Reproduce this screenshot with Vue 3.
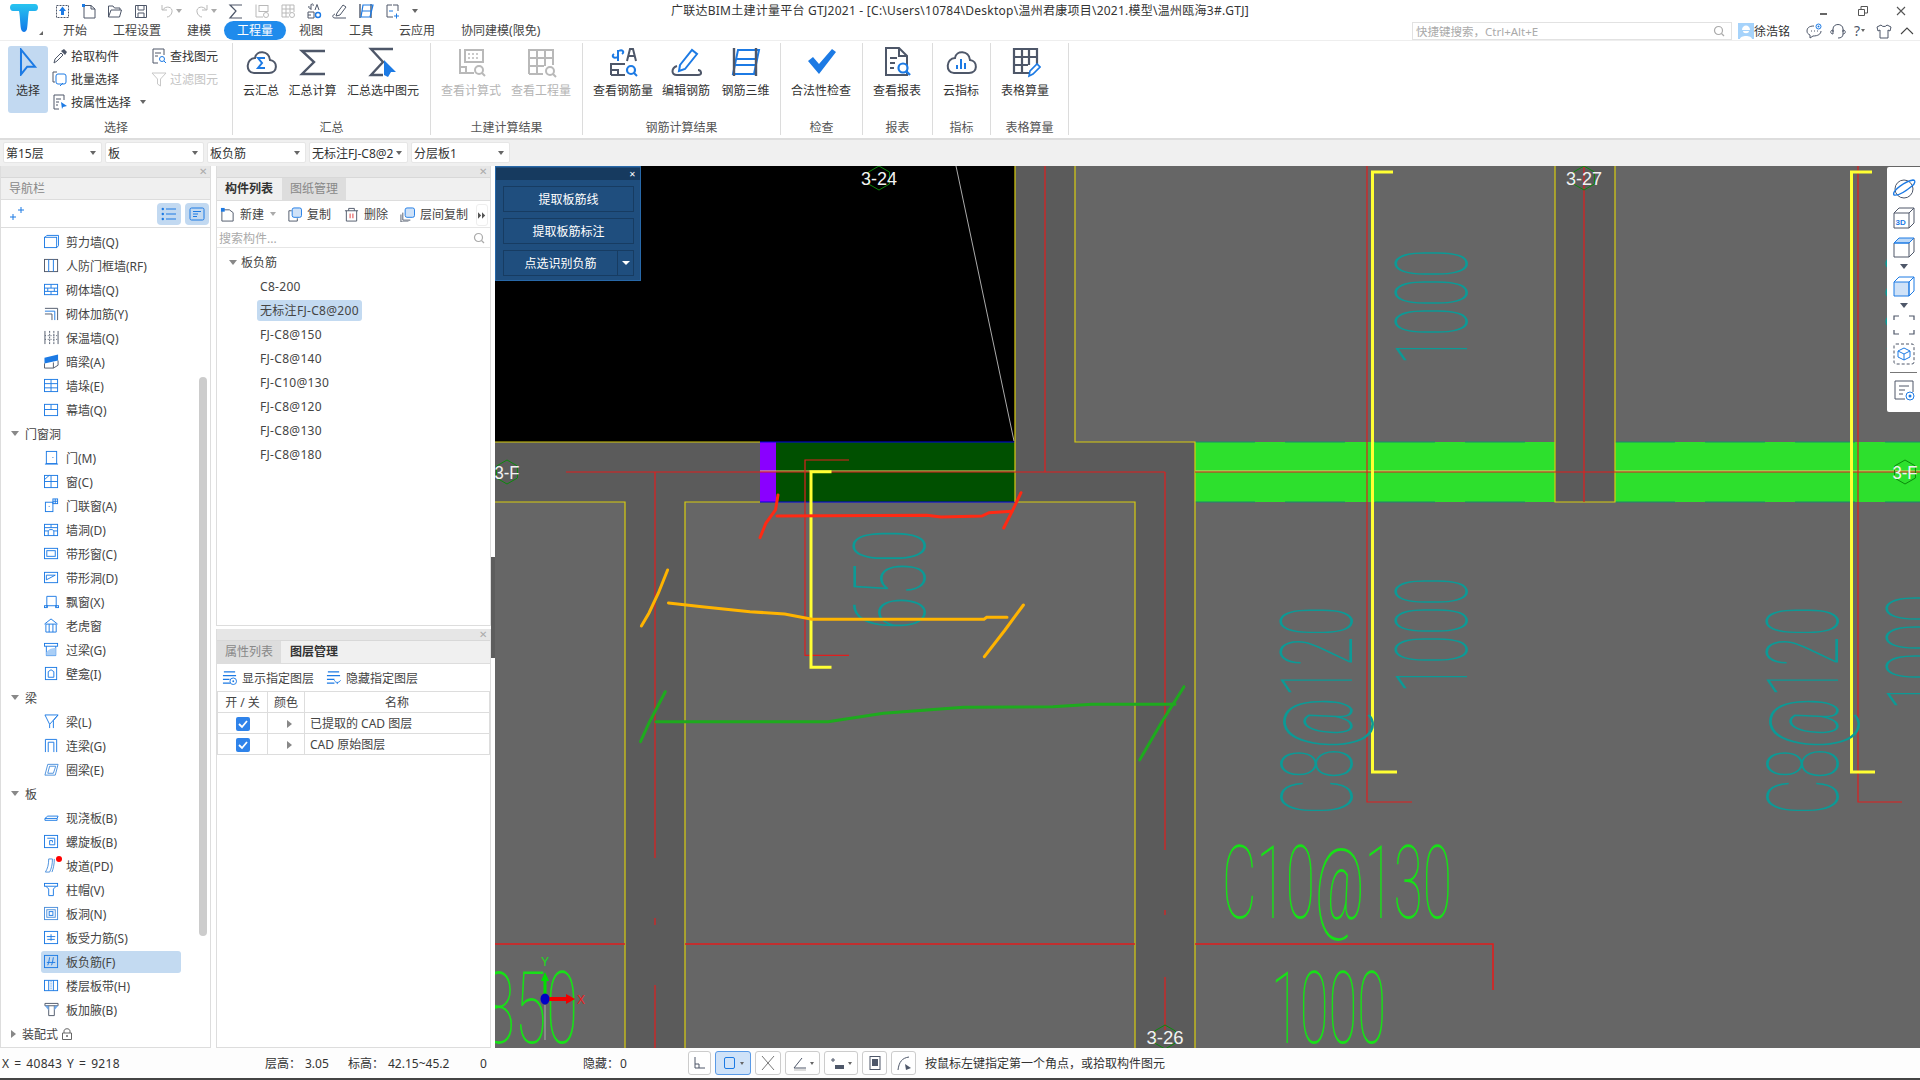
<script setup>
const B = '#1c7ae4'
const D = '#4e5769'
const G = '#b9b9b9'
const r = (x, y, w, h, c = B, extra = '') => `<rect x="${x}" y="${y}" width="${w}" height="${h}" fill="none" stroke="${c}" ${extra}/>`
const p = (d, c = B, extra = '') => `<path d="${d}" fill="none" stroke="${c}" ${extra}/>`
const f = (d, c = B) => `<path d="${d}" fill="${c}"/>`
const w2 = 'stroke-width="2"'

// tree icons, 16 box
const nav = {
  wall: r(.5, 3.5, 13, 11) + p('M1 3.5 3 1.5H15.5V12.5L13.5 14.5'),
  rf: r(.5, 1.5, 14, 13, D) + p('M5 1.5v13M10 1.5v13'),
  masonry: r(.5, 2.5, 14, 11) + p('M.5 6.5h14M.5 10h14M7.5 2.5v4M4 6.5V10M11 6.5V10M7.5 10v3.5'),
  bar: p('M1 2.5H14.5V15', D) + p('M1 5.5H11.5V15') + p('M1 8.5H8.5V15', D),
  warm: p('M1 1v14M15 1v14', D) + p('M6 1v14M10.5 1v14', D, 'stroke-dasharray="2 1"') + p('M1 6h14M1 10h14', D, 'stroke-dasharray="1 2"'),
  hidden: f('M.5 4 15 .5V7L.5 10Z') + p('M.5 10V15H10L15 12V7M10 9V15', D),
  pier: r(.5, 1.5, 14, 13) + p('M.5 6h7M.5 10.5h14M7.5 1.5V6M7.5 10.5V14.5M14.5 6H7.5V10.5'),
  curtain: r(.5, 2.5, 14, 12) + p('M.5 8h14M7.5 2.5V8'),
  door: r(2.5, 1.5, 11, 13) + p('M1 15h14M9 8h1'),
  window: r(.5, 1.5, 14, 13) + p('M.5 8h14M7.5 1.5v13M.5 6 5.5 1.5'),
  combo: r(1.5, 4.5, 8, 10) + r(9.5, 1, 5, 5) + p('M12 1v5M9.5 3.5h5M5 9h1'),
  hole: r(.5, 2.5, 14, 12) + p('M.5 6h14M.5 9.5h4v5M14.5 9.5h-4v5M7.5 2.5V6M4.5 9.5c1-2 5-2 6 0'),
  strip: r(.5, 2.5, 14, 11) + r(3, 5, 9, 6),
  striph: r(.5, 2.5, 14, 11) + p('M2.5 10.5 12 5.5M2.5 5.5h9.5M2.5 5.5v5'),
  bay: p('M3 14V2.5H13V14') + r(.5, 12.5, 3, 2) + r(12.5, 12.5, 3, 2) + p('M3 12.5h10'),
  dormer: p('M.5 6.5 7.5 1 14.5 6.5M2 6.5h11V15H2ZM5.5 6.5V15M9.5 6.5V15'),
  lintel: r(.5, 1.5, 14, 3) + p('M2.5 4.5V14.5H12.5V4.5') + f('M2.5 11C5 7 9 6.5 12.5 6V14.5H2.5Z', '#a9cef6'),
  niche: r(1.5, 1.5, 12, 13) + p('M4.5 12V6L7.5 4 10.5 6V12Z'),
  beam: p('M1 1H15L6 11V15M15 1 10 7V15M1 1 6 11M10 15'),
  link: p('M1.5 15V1.5H13.5V15M4.5 15V4.5H10.5V15'),
  ring: p('M4 2.5H15L12 14H1ZM6 4.5H12.5L10 12H4Z', '#4a8fdc'),
  slab: p('M1 9 4 6.5H15L14 9ZM1 9V11H14V9'),
  spiral: r(.5, 1.5, 14, 13) + p('M3.5 4.5H11.5V11.5H6V7H9V9'),
  ramp: p('M5 1C5 7 4 11 1.5 15H6C8 11 9 7 9 1ZM11 1C11 7 10 11 8.5 15', '#4a8fdc'),
  cap: r(.5, 1.5, 14, 3) + p('M2 4.5 5 7.5V14.5H10V7.5L13 4.5'),
  slabh: r(.5, 1.5, 14, 13, '#4a8fdc') + r(3, 4, 9, 8, '#4a8fdc') + r(5.5, 6, 4, 4),
  srebar: r(.5, 1.5, 14, 13) + p('M3 7H12M3.5 10H11.5M7.5 4.5V11.5'),
  nrebar: r(.5, 1.5, 14, 13) + p('M3 9H12M6 3.5 5 9 4 12M10 3.5 9 9 8 12'),
  band: r(.5, 2.5, 14, 11) + p('M5 2.5v11M10 2.5v11') + p('M7.5 3v10', B, 'stroke-dasharray="1 1"'),
  haunch: p('M1 1.5H15V4H1ZM5 4V14.5H11V4', D) + f('M1 4H5V9Z', '#6fa8ea') + f('M15 4H11V9Z', '#6fa8ea')
}

const navRows = [
  ['剪力墙(Q)', 'wall'], ['人防门框墙(RF)', 'rf'], ['砌体墙(Q)', 'masonry'], ['砌体加筋(Y)', 'bar'],
  ['保温墙(Q)', 'warm'], ['暗梁(A)', 'hidden'], ['墙垛(E)', 'pier'], ['幕墙(Q)', 'curtain'],
  ['门窗洞'], ['门(M)', 'door'], ['窗(C)', 'window'], ['门联窗(A)', 'combo'], ['墙洞(D)', 'hole'],
  ['带形窗(C)', 'strip'], ['带形洞(D)', 'striph'], ['飘窗(X)', 'bay'], ['老虎窗', 'dormer'],
  ['过梁(G)', 'lintel'], ['壁龛(I)', 'niche'],
  ['梁'], ['梁(L)', 'beam'], ['连梁(G)', 'link'], ['圈梁(E)', 'ring'],
  ['板'], ['现浇板(B)', 'slab'], ['螺旋板(B)', 'spiral'], ['坡道(PD)', 'ramp'], ['柱帽(V)', 'cap'],
  ['板洞(N)', 'slabh'], ['板受力筋(S)', 'srebar'], ['板负筋(F)', 'nrebar'], ['楼层板带(H)', 'band'], ['板加腋(B)', 'haunch']
]

// big ribbon icons, 32 box
const bigIcons = {
  cloudSum: p('M9 27H24C33 27 33 15 25 14 24 4 11 4 10 12 1 12 0 27 9 27Z', D, w2) + p('M20 12H13L17 17 13 22H20', B, w2),
  sum: p('M28 5H5L17 16 5 28H28', D, 'stroke-width="2.4"'),
  sumSel: p('M26 3H4L16 16 4 29H16', D, 'stroke-width="2.4"') + f('M17 14 29 26 24 26 21 31 17 29Z'),
  calc: p('M5 3V27H19M5 21H11V27', G, w2) + r(10, 4, 18, 12, G, w2) + p('M13 8h12M13 12h12', G, 'stroke-dasharray="2 2" stroke-width="1.5"') + `<circle cx="24" cy="24" r="4" fill="none" stroke="${G}" stroke-width="2"/>` + p('M27 27l3 3', G, w2),
  qty: p('M4 28V4H28V19M4 12H28M4 20H19M12 4V28M20 4V20M4 28H18', G, w2) + `<circle cx="25" cy="25" r="4" fill="none" stroke="${G}" stroke-width="2"/>` + p('M28 28l3 3', G, w2),
  rebar: p('M11 4V15M7 8C4 10 7 13 10 11M15 8C18 6 15 3 12 5', B, w2) + p('M20 15 23 3H26L29 15M21 10H28', D, w2) + p('M4 29V18H18M4 29H18M4 24H11V29', D, w2) + `<circle cx="24" cy="24" r="4" fill="none" stroke="${B}" stroke-width="2.2"/>` + p('M27 27l3 3', B, w2),
  edit: p('M10 19 22 4 27 8 15 23 9 25Z', B, w2) + p('M7 20C1 22 1 29 7 29H28C33 29 31 24 28 24', D, w2),
  rebar3d: p('M8 4H29L24 28H3ZM6 13H27M5 19H26', B, w2) + p('M4 2V30M26 2V30', D, 'stroke-width="2.4"'),
  check: f('M3 15 8 11 14 18 27 3 31 6 14 28Z'),
  report: p('M18 2H5V29H26V10ZM18 2V10H26', D, w2) + p('M9 12H16M9 17H14M9 22H13', D, w2) + `<circle cx="22" cy="22" r="4.5" fill="#fff" stroke="${B}" stroke-width="2.2"/>` + p('M25 25l4 4', B, 'stroke-width="2.4"'),
  cloudBar: p('M9 27H24C33 27 33 15 25 14 24 4 11 4 10 12 1 12 0 27 9 27Z', D, w2) + p('M12 23V19M16 23V13M20 23V17', B, w2),
  sheet: p('M20 27H5V3H28V18M5 11H28M5 19H19M13 3V27M20 3V19', D, 'stroke-width="2.2"') + p('M20 30 21 25 28 18 31 21 24 28Z', B, 'stroke-width="1.6"')
}

const groups = [
  { label: '汇总', width: 198, pad: 3, items: [['云汇总', 'cloudSum', 50], ['汇总计算', 'sum', 53], ['汇总选中图元', 'sumSel', 88]] },
  { label: '土建计算结果', width: 152, pad: 5, off: true, items: [['查看计算式', 'calc', 70], ['查看工程量', 'qty', 70]] },
  { label: '钢筋计算结果', width: 198, pad: 5, items: [['查看钢筋量', 'rebar', 70], ['编辑钢筋', 'edit', 56], ['钢筋三维', 'rebar3d', 63]] },
  { label: '检查', width: 82, pad: 5, items: [['合法性检查', 'check', 70]] },
  { label: '报表', width: 70, pad: 3, items: [['查看报表', 'report', 62]] },
  { label: '指标', width: 58, pad: 3, items: [['云指标', 'cloudBar', 50]] },
  { label: '表格算量', width: 78, pad: 3, items: [['表格算量', 'sheet', 62]] }
]

const tabs = ['开始', '工程设置', '建模', '工程量', '视图', '工具', '云应用', '协同建模(限免)']
const combos = ['第15层', '板', '板负筋', '无标注FJ-C8@2', '分层板1']
const parts = ['C8-200', '无标注FJ-C8@200', 'FJ-C8@150', 'FJ-C8@140', 'FJ-C10@130', 'FJ-C8@120', 'FJ-C8@130', 'FJ-C8@180']

// quick access icons, 16 box
const qat = [
  { w: 16, s: r(1.5, 2.5, 12, 12, D, 'stroke-dasharray="2 1"') + f('M7.5 3.5 11 8H9V12H6V8H4Z') },
  { w: 16, s: p('M3 2.5H10L14 6V15H3ZM10 2.5V6H14', D) + f('M1 1h3v3H1Z') },
  { w: 16, s: p('M1.5 14V3H6L7.5 5H13V7M1.5 14H12.5L14.5 7H4L1.5 14', D) },
  { w: 16, s: p('M2.5 2.5H13.5V14.5H2.5ZM5 2.5V7H11V2.5M5 10H11V14.5H5Z', D) },
  { w: 25, s: p('M3 2V7H8M3.5 7C7 2 14 4 13 9 12.5 12 10 14 8 14', G), arrow: true },
  { w: 24, s: p('M13 2V7H8M12.5 7C9 2 2 4 3 9 3.5 12 6 14 8 14', G), arrow: true },
  { w: 16, s: p('M14 2H2L8 8 2 15H14', D, 'stroke-width="1.2"') },
  { w: 16, s: p('M2 1.5V14H9', G) + r(5, 2.5, 9, 6, G) + `<circle cx="12" cy="12" r="2.5" fill="none" stroke="${G}"/>` },
  { w: 16, s: p('M2 14V2H14V9M2 6H14M2 10H9M6 2V14M10 2V10M2 14H9', G) + `<circle cx="12" cy="12" r="2.5" fill="none" stroke="${G}"/>` },
  { w: 16, s: p('M5 1.5V7M3 3C2 5 4 6 5 5M7 3C8 1 6 0 5 2M9 7 11 1.5 13 7', D) + p('M2 15V9H8V15ZM2 12H5', D) + `<circle cx="12" cy="12" r="2.5" fill="none" stroke="${B}" stroke-width="1.4"/>` },
  { w: 16, s: p('M5 10 11 2 14 4 8 12 4 13ZM3 11C0 12 0 15 3 15H14', D) },
  { w: 16, s: p('M2 1V15M13 1V15', D, 'stroke-width="1.4"') + p('M5 2H15L12 14H3ZM4 8H13', B, 'stroke-width="1.2"') },
  { w: 16, s: p('M8 2H3V14H9M9 2H14V8', D) + p('M10 13h5M12.5 10.5v5M5 8h4', B) }
]

const paneTools = [
  { t: '新建', s: p('M3 3H10L14 6V15H2V3', D) + f('M1 1h4v4H1Z'), arrow: true, gap: 23 },
  { t: '复制', s: p('M5 4H2V15H11V12', D) + `<rect x="5.5" y="1" width="10" height="10" rx="2" fill="#cfe2f8" stroke="${B}"/>`, gap: 13 },
  { t: '删除', s: p('M1 4H15M5 4V1.5H11V4M2.5 4V15H13.5V4', D) + p('M6.5 7v5M9.5 7v5', '#e03a3a'), gap: 12 },
  { t: '层间复制', s: p('M3 6V14H11M1 8V16H9', D) + `<rect x="5.5" y="1" width="10" height="10" rx="2" fill="#cfe2f8" stroke="${B}"/>` }
]

const layerShow = p('M2 2h12M1 6h14M1 10h7M1 14h8', B, 'stroke-width="1.2"') + `<circle cx="12" cy="12" r="3.5" fill="#fff" stroke="${B}"/><circle cx="12" cy="12" r="1" fill="${B}"/>`
const layerHide = p('M2 2h12M1 6h14M1 10h8M1 14h8', B, 'stroke-width="1.2"') + p('M9 11C10 14 14 14 15.5 11M12 13v2', B)

// status bar buttons
const statusBtns = [
  { w: 23, s: p('M3 2V13H13M3 9H7V13', D) },
  { w: 36, on: true, arrow: true, s: `<rect x="2.5" y="2.5" width="10" height="11" rx="1.5" fill="none" stroke="${B}"/>` },
  { w: 26, s: p('M2 1 14 15M14 1 2 15', '#777') },
  { w: 35, arrow: true, s: p('M2 13 10 3M2 13H14', D) + p('M2 15H14', '#bbb') },
  { w: 34, arrow: true, s: p('M1 5H5M3 3V7', D) + f('M5 10H14V14H5Z', D) },
  { w: 25, s: r(3, 1.5, 10, 13, D) + f('M5 4H11V11H5Z', D) },
  { w: 25, s: p('M2 15C3 7 6 3 13 2', D) + f('M9 9 15 13 10 15Z', D) }
]

// right side view toolbar, 24 box
const viewTools = [
  { k: 'a', s: `<ellipse cx="12" cy="12" rx="9" ry="9" fill="none" stroke="${D}"/>` + p('M2 18C-1 14 14 4 21 3 24 3 23 7 20 9 14 14 6 19 2 18Z', B, 'stroke-width="1.3"') },
  { k: 'b', s: p('M2 7H17V22H2ZM2 7 7 2H22V17L17 22M17 7 22 2', D) + `<text x="3.5" y="19" font-size="8" font-weight="700" fill="${B}" font-family="Liberation Sans">3D</text>` },
  { k: 'c', s: p('M2 8V22H17L22 17V3', D) + `<path d="M2 8 7 3H22L17 8Z" fill="#bcd8f7" stroke="${B}"/>` + p('M17 8V22', D) + p('M2 8H17', B) },
  { k: 'd1', arrow: true },
  { k: 'd', s: `<path d="M2 8H17V22H2Z" fill="#cfe2f8" stroke="${B}"/><path d="M2 8 7 3H22V17L17 22V8L22 3" fill="none" stroke="${B}"/>` },
  { k: 'e1', arrow: true },
  { k: 'e', s: p('M2 7V3H7M17 3H22V7M2 17V21H7M17 21H22V17', D, 'stroke-width="1.2"') },
  { k: 'f', s: r(2, 2, 20, 20, D, 'rx="2" stroke-dasharray="3 2"') + p('M12 6 18 9V15L12 18 6 15V9ZM6 9 12 12 18 9M12 12V18', B) },
  { k: 'line', line: true },
  { k: 'g', s: p('M21 14V3H3V21H13', D) + p('M7 8h10M7 12h6M7 16h4', D) + `<circle cx="18" cy="18" r="4" fill="none" stroke="${B}"/><circle cx="18" cy="18" r="1.5" fill="${B}"/>` }
]

// lettering on the drawing: kept as real text, stretched into its box
const cadV = [
  { t: '1000', x: 1466.5, y: 365, len: 116 }, { t: '1000', x: 1466.5, y: 693, len: 116 },
  { t: '1000', x: 1958, y: 365, len: 116 }, { t: '1000', x: 1958, y: 710, len: 116 },
  { t: 'C8@120', x: 1351.5, y: 815, len: 209 }, { t: 'C8@120', x: 1837.6, y: 815, len: 209 },
  { t: '650', x: 925, y: 630, len: 101 }
]
const cadH = [
  { t: 'C10@130', x: 1222, y: 918, len: 230, size: 102 },
  { t: '1000', x: 1271, y: 1043, len: 115, size: 100 },
  { t: '850', x: 483, y: 1043, len: 95, size: 100 }
]

const strokes = [
  { c: '#ff2a14', d: ['M777 516 927 515.3 941 517 982 516 989 512.7 1012 511.3', 'M778 495 775.5 510 766 523 760 537.7', 'M1021 492.7 1012 511.7 1003.7 528'] },
  { c: '#ffb400', d: ['M668.5 603 702 606.7 750 611.7 784.7 614 812 619.3 984 619.3 986.7 617.3 1007 617.3', 'M667.6 570 658.4 593 649 613 641.4 626', 'M1023.4 605 1005 630 984.4 656.7'] },
  { c: '#1eaa1e', d: ['M656 721.7 828 721.7 883.4 713.3 963.7 707.3 1053 706.7 1092 704.3 1175 704.3', 'M665.3 691.7 649 723 640.5 741.7', 'M1184 686.7 1161 723.3 1139.6 760'] }
]

const hex = (x, y, s = 12) => `${x},${y - s} ${x + s * .87},${y - s / 2} ${x + s * .87},${y + s / 2} ${x},${y + s} ${x - s * .87},${y + s / 2} ${x - s * .87},${y - s / 2}`
const axisMarks = [
  { t: '3-24', x: 879, y: 178, len: 36 }, { t: '3-27', x: 1584, y: 178, len: 36 },
  { t: '3-F', x: 507, y: 472, len: 25 }, { t: '3-F', x: 1905, y: 472, len: 25 },
  { t: '3-26', x: 1165, y: 1037, len: 37 }
]
</script>

<template>
  <div class="app">
    <header class="top">
      <svg class="logo" viewBox="0 0 30 30">
        <defs>
          <linearGradient id="tg" x1="0" y1="0" x2="0" y2="1">
            <stop offset="0" stop-color="#27c4f0" />
            <stop offset="1" stop-color="#1278e8" />
          </linearGradient>
        </defs>
        <path d="M4 1H26C30 1 30 8 26 8H20C19 12 19 20 18 26 17 30 13 30 12 26 11 20 11 12 10 8H4C0 8 0 1 4 1Z" fill="url(#tg)" />
      </svg>
      <span class="logo-arrow"></span>
      <div class="row-title">
        <div class="qat">
          <span v-for="(q, i) in qat" :key="i" class="qat-item" :style="{ width: q.w + 'px' }">
            <svg class="i16" viewBox="0 0 16 16" v-html="q.s"></svg>
            <i v-if="q.arrow" class="tri"></i>
          </span>
          <i class="tri qat-more"></i>
        </div>
        <div class="title">广联达BIM土建计量平台 GTJ2021 - [C:\Users\10784\Desktop\温州君康项目\2021.模型\温州瓯海3#.GTJ]</div>
        <div class="win">
          <svg class="i12" viewBox="0 0 12 12"><path d="M1 9H8" stroke="#666" stroke-width="2" /></svg>
          <svg class="i12" viewBox="0 0 12 12"><path d="M1.5 4.5H7.5V10.5H1.5ZM4 4V1.5H10.5V8H8" fill="none" stroke="#555" /></svg>
          <svg class="i12" viewBox="0 0 12 12"><path d="M2 2 10 10M10 2 2 10" stroke="#555" stroke-width="1.1" /></svg>
        </div>
      </div>
      <div class="row-tabs">
        <span v-for="t in tabs" :key="t" class="tab" :class="{ on: t === '工程量' }">{{ t }}</span>
        <div class="tab-right">
          <div class="quick">
            <span>快捷键搜索，Ctrl+Alt+E</span>
            <svg class="i12" viewBox="0 0 12 12"><circle cx="5.5" cy="5.5" r="4" fill="none" stroke="#aaa" stroke-width="1.2" /><path d="M8.5 8.5 11 11" stroke="#aaa" stroke-width="1.2" /></svg>
          </div>
          <svg class="avatar" viewBox="0 0 16 16">
            <rect width="16" height="16" fill="#a6d3fb" />
            <path d="M4 7C4 1 12 1 12 7ZM5 8C5 11 11 11 11 8ZM2 16C2 12 14 12 14 16Z" fill="#fff" />
          </svg>
          <span class="uname">徐浩铭</span>
          <svg class="i16 tr1" viewBox="0 0 16 16">
            <path d="M8 3C3 3 1 5 1 8 1 10 2 11 4 12L4 15 7 13C12 13 15 11 15 8" fill="none" stroke="#4e5769" />
            <path d="M5 8h1M8 8h1M11 8h1" stroke="#4e5769" />
            <circle cx="12.5" cy="3.5" r="2.5" fill="#fff" stroke="#1c7ae4" /><circle cx="12.5" cy="3.5" r="1" fill="#1c7ae4" />
          </svg>
          <svg class="i16 tr2" viewBox="0 0 16 16"><path d="M3 9V6C3 0 13 0 13 6V9M3 7C0 7 0 11 3 11ZM13 7C16 7 16 11 13 11ZM13 11C13 14 11 15 8 15" fill="none" stroke="#4e5769" /></svg>
          <span class="help">?<i class="tri"></i></span>
          <svg class="i16 tr3" viewBox="0 0 16 16"><path d="M5 2 1 4 2 8 4 7V15H12V7L14 8 15 4 11 2C10 4 6 4 5 2Z" fill="none" stroke="#4e5769" /></svg>
          <svg class="i16 tr4" viewBox="0 0 16 16"><path d="M2 11 8 5 14 11" fill="none" stroke="#444" stroke-width="1.1" /></svg>
        </div>
      </div>
    </header>

    <section class="ribbon">
      <div class="rgroup first">
        <div class="rbody sel">
          <div class="pick-big">
            <svg class="pick-arrow" viewBox="0 0 24 36"><path d="M3 2 21 24 11 24 3 34Z" fill="none" stroke="#1c7ae4" stroke-width="2.6" /></svg>
            <span>选择</span>
          </div>
          <div class="sel-col">
            <div class="small">
              <svg class="i16" viewBox="0 0 16 16"><path d="M2 15 3 11 9 5 11 7 5 13Z" fill="#fff" stroke="#4e5769" /><path d="M9 3 13 7 15 4 12 1Z" fill="#4e5769" /></svg>
              拾取构件
            </div>
            <div class="small">
              <svg class="i16" viewBox="0 0 16 16"><path d="M5 1H1V11H3" fill="none" stroke="#4e5769" /><rect x="4" y="3" width="10" height="10" rx="2" fill="none" stroke="#1c7ae4" /><path d="M8 15 11 12" stroke="#1c7ae4" /></svg>
              批量选择
            </div>
            <div class="small">
              <svg class="i16" viewBox="0 0 16 16"><path d="M12 6V1H2V15H7M4 5H9M4 8H7M4 11H6" fill="none" stroke="#4e5769" /><path d="M9 8 15 12 11 13 10 15Z" fill="#1c7ae4" /></svg>
              按属性选择<i class="tri attr"></i>
            </div>
          </div>
          <div class="sel-col col2">
            <div class="small">
              <svg class="i16" viewBox="0 0 16 16"><path d="M13 7V1H2V15H7M4 5H10M4 8H7" fill="none" stroke="#4e5769" /><circle cx="11" cy="11" r="2.5" fill="none" stroke="#1c7ae4" /><path d="M13 13 15 15" stroke="#1c7ae4" /></svg>
              查找图元
            </div>
            <div class="small off">
              <svg class="i16" viewBox="0 0 16 16"><path d="M1 2H15L9.5 8V15L6.5 13V8Z" fill="none" stroke="#c8c8c8" /></svg>
              过滤图元
            </div>
          </div>
        </div>
        <div class="rlabel">选择</div>
      </div>
      <div v-for="g in groups" :key="g.label" class="rgroup" :style="{ width: g.width + 'px' }">
        <div class="rbody" :class="{ off: g.off }" :style="{ paddingLeft: g.pad + 'px' }">
          <div v-for="it in g.items" :key="it[0]" class="big" :style="{ width: it[2] + 'px' }">
            <svg class="i32" viewBox="0 0 32 32" v-html="bigIcons[it[1]]"></svg>
            <span>{{ it[0] }}</span>
          </div>
        </div>
        <div class="rlabel">{{ g.label }}</div>
      </div>
    </section>

    <section class="combos">
      <div v-for="c in combos" :key="c" class="combo"><span>{{ c }}</span><i class="tri"></i></div>
    </section>

    <main class="main">
      <aside class="nav">
        <div class="pane-bar"><span class="x">✕</span></div>
        <div class="nav-head">导航栏</div>
        <div class="nav-tools">
          <svg class="i16" viewBox="0 0 16 16"><path d="M1 11H7M4 8V14M9 4H15M12 1V7" stroke="#1c7ae4" /></svg>
          <div class="nav-toggles">
            <span class="toggle"><svg class="i16" viewBox="0 0 16 16"><path d="M5 3H15M5 8H15M5 13H15" stroke="#1c7ae4" stroke-width="1.2" /><circle cx="1.8" cy="3" r="1.2" fill="#1c7ae4" /><circle cx="1.8" cy="8" r="1.2" fill="#1c7ae4" /><circle cx="1.8" cy="13" r="1.2" fill="#1c7ae4" /></svg></span>
            <span class="toggle"><svg class="i16" viewBox="0 0 16 16"><rect x="1" y="2" width="14" height="12" rx="1.5" fill="none" stroke="#1c7ae4" /><path d="M4 5.5H12M4 8H9M4 10.5H8" stroke="#1c7ae4" /></svg></span>
          </div>
        </div>
        <div class="nav-tree">
          <div class="scroll-thumb"></div>
          <template v-for="row in navRows" :key="row[0]">
            <div v-if="row[1]" class="nav-item" :class="{ sel: row[0] === '板负筋(F)' }">
              <svg class="i15" viewBox="0 0 16 16" v-html="nav[row[1]]"></svg>
              <span>{{ row[0] }}</span>
              <i v-if="row[0] === '坡道(PD)'" class="dot"></i>
            </div>
            <div v-else class="nav-group"><i class="tri open"></i>{{ row[0] }}</div>
          </template>
          <div class="nav-group"><i class="tri shut"></i>装配式
            <svg class="i12 lock" viewBox="0 0 12 12"><path d="M3 5V3C3 0 9 0 9 3V5M1.5 5H10.5V11.5H1.5Z" fill="none" stroke="#666" /><circle cx="6" cy="8" r="1" fill="#666" /></svg>
          </div>
        </div>
      </aside>

      <div class="mid">
        <div class="pane upper">
          <div class="pane-bar"><span class="x">✕</span></div>
          <div class="pane-tabs">
            <span class="ptab act">构件列表</span>
            <span class="ptab">图纸管理</span>
          </div>
          <div class="pane-tools">
            <div v-for="b in paneTools" :key="b.t" class="ptool" :style="{ marginRight: (b.gap || 0) + 'px' }">
              <svg class="i15" viewBox="0 0 16 16" v-html="b.s"></svg>
              <span>{{ b.t }}</span>
              <i v-if="b.arrow" class="tri tool-arrow"></i>
            </div>
            <span class="more"><svg viewBox="0 0 10 8" width="8" height="7"><path d="M0 0 4 4 0 8ZM5 0 9 4 5 8Z" fill="#555" /></svg></span>
          </div>
          <div class="pane-search">
            <span>搜索构件...</span>
            <svg class="i12" viewBox="0 0 12 12"><circle cx="5.5" cy="5.5" r="4" fill="none" stroke="#aaa" stroke-width="1.2" /><path d="M8.5 8.5 11 11" stroke="#aaa" stroke-width="1.2" /></svg>
          </div>
          <div class="part-tree">
            <div class="part-root"><i class="tri open"></i>板负筋</div>
            <div v-for="x in parts" :key="x" class="part"><span :class="{ hit: x === '无标注FJ-C8@200' }">{{ x }}</span></div>
          </div>
        </div>
        <div class="pane lower">
          <div class="pane-bar"><span class="x">✕</span></div>
          <div class="pane-tabs">
            <span class="ptab">属性列表</span>
            <span class="ptab act">图层管理</span>
          </div>
          <div class="layer-tools">
            <div class="ptool"><svg class="i15" viewBox="0 0 16 16" v-html="layerShow"></svg><span>显示指定图层</span></div>
            <div class="ptool"><svg class="i15" viewBox="0 0 16 16" v-html="layerHide"></svg><span>隐藏指定图层</span></div>
          </div>
          <table class="layers">
            <thead>
              <tr><th class="c1">开 / 关</th><th class="c2">颜色</th><th>名称</th></tr>
            </thead>
            <tbody>
              <tr v-for="n in ['已提取的 CAD 图层', 'CAD 原始图层']" :key="n">
                <td class="c1"><span class="check"><svg viewBox="0 0 14 14"><path d="M3 7 6 10 11 4" fill="none" stroke="#fff" stroke-width="1.8" /></svg></span></td>
                <td class="c2 arrow-cell"><i class="tri shut"></i></td>
                <td>{{ n }}</td>
              </tr>
            </tbody>
          </table>
        </div>
      </div>

      <div class="gutter"><span class="grip"></span></div>

      <div class="canvas">
        <svg class="drawing" viewBox="495 166 1425 882" width="1425" height="882">
          <rect x="495" y="166" width="1425" height="882" fill="#666" />
          <rect x="495" y="166" width="520" height="276" fill="#000" />
          <!-- walls -->
          <g fill="#5b5b5b">
            <rect x="495" y="442" width="265" height="60" />
            <rect x="625" y="502" width="60" height="546" />
            <rect x="1015" y="166" width="60" height="336" />
            <rect x="1015" y="442" width="180" height="60" />
            <rect x="1135" y="502" width="60" height="546" />
            <rect x="1555" y="166" width="60" height="336" />
          </g>
          <rect x="760" y="442" width="16" height="60" fill="#8a00ff" />
          <rect x="776" y="442" width="239" height="60" fill="#005000" />
          <path d="M760 442H1015M760 502H1015" stroke="#0000e0" stroke-width="1.2" />
          <!-- slab strip -->
          <rect x="1195" y="442" width="360" height="60" fill="#2de02d" />
          <rect x="1615" y="442" width="305" height="60" fill="#2de02d" />
          <path d="M1195 442H1555M1615 442H1920M1195 502H1555M1615 502H1920" stroke="#1a8a6a" stroke-dasharray="60 30" />
          <path d="M760 471H1015M1195 471H1555M1615 471H1920" stroke="#e8d36a" />
          <!-- yellow outlines -->
          <path
            d="M495 442H760M495 502H625V1048M685 1048V502H760M1015 166V502M1015 502H1135V1048M1075 166V442H1195V1048M1555 166V502H1615V166"
            fill="none"
            stroke="#d8cc10"
            stroke-width="1.2"
          />
          <path d="M956 166 1014 441" stroke="#aaa" />
          <!-- axis and rebar lines -->
          <g fill="none" stroke="#e01e1e" stroke-width="1.2">
            <path d="M566 472H1165M655 472V858M655 918V925M655 985V1048M1165 472V850M1165 910V915M1165 977V1030M1045 166V472" />
            <path d="M1195 472H1920M1584 166V502M1367 166V802H1412M1858 166V802H1902" />
            <path d="M849 460H805V655.3H849" />
            <path d="M495 944H625M685 944H1135M1195 944H1493V990" stroke-width="1.6" />
          </g>
          <g fill="none" stroke="#ffff33" stroke-width="3">
            <path d="M1393 172H1372.5V772H1397M1872 172H1851.5V772H1875M831.5 471.7H811V667.3H831.5" />
          </g>
          <!-- lettering -->
          <g class="cad teal">
            <text
              v-for="(c, i) in cadV"
              :key="i"
              :transform="`translate(${c.x} ${c.y}) rotate(-90)`"
              font-size="101"
              :textLength="c.len"
              lengthAdjust="spacingAndGlyphs"
            >{{ c.t }}</text>
          </g>
          <g class="cad lime">
            <text
              v-for="c in cadH"
              :key="c.t"
              :x="c.x"
              :y="c.y"
              :font-size="c.size"
              :textLength="c.len"
              lengthAdjust="spacingAndGlyphs"
            >{{ c.t }}</text>
          </g>
          <!-- hand marks -->
          <g v-for="s in strokes" :key="s.c" fill="none" :stroke="s.c" stroke-width="3" stroke-linecap="round">
            <path v-for="d in s.d" :key="d" :d="d" />
          </g>
          <!-- axis bubbles -->
          <g v-for="m in axisMarks" :key="m.x + m.t">
            <polygon :points="hex(m.x, m.y)" fill="none" stroke="#0b8a0b" />
            <text class="axis" :x="m.x" :y="m.y + 7" text-anchor="middle" :textLength="m.len" lengthAdjust="spacingAndGlyphs">{{ m.t }}</text>
          </g>
          <!-- origin -->
          <path d="M545 1005V1040" stroke="#aaa" />
          <path d="M545 995V978" stroke="#00e000" stroke-width="3" />
          <path d="M545 972 549 981H541Z" fill="#00e000" />
          <path d="M549 999H567" stroke="#f00000" stroke-width="4" />
          <path d="M575 999 566 994V1004Z" fill="#f00000" />
          <ellipse cx="545" cy="999" rx="4.5" ry="5.5" fill="#0000c8" />
          <text class="axis-y" x="545" y="966" text-anchor="middle">Y</text>
          <text class="axis-x" x="581" y="1004" text-anchor="middle">X</text>
        </svg>

        <div class="extract">
          <div class="extract-head"><span>✕</span></div>
          <div class="extract-btn">提取板筋线</div>
          <div class="extract-btn">提取板筋标注</div>
          <div class="extract-btn split"><span class="main-part">点选识别负筋</span><span class="drop"><i></i></span></div>
        </div>

        <div class="viewbar">
          <template v-for="v in viewTools" :key="v.k">
            <i v-if="v.arrow" class="view-tri"></i>
            <span v-else-if="v.line" class="view-line"></span>
            <svg v-else class="i24" viewBox="0 0 24 24" v-html="v.s"></svg>
          </template>
        </div>
      </div>
    </main>

    <footer class="status">
      <span class="s-xy">X = 40843 Y = 9218</span>
      <span class="s-a">层高：</span><span class="s-b">3.05</span>
      <span class="s-c">标高：</span><span class="s-d">42.15~45.2</span>
      <span class="s-e">0</span>
      <span class="s-f">隐藏：</span><span class="s-g">0</span>
      <div class="s-btns">
        <span v-for="(b, i) in statusBtns" :key="i" class="s-btn" :class="{ on: b.on }" :style="{ width: b.w + 'px' }">
          <svg class="i16" viewBox="0 0 16 16" v-html="b.s"></svg>
          <i v-if="b.arrow" class="tri"></i>
        </span>
      </div>
      <span class="s-hint">按鼠标左键指定第一个角点，或拾取构件图元</span>
    </footer>
  </div>
</template>

<style>
html, body { margin: 0; background: #fff; overflow: hidden; }
</style>

<style scoped>
.app {
  width: 1920px;
  height: 1080px;
  display: flex;
  flex-direction: column;
  font-family: "Noto Sans", "Noto Sans CJK SC", "Liberation Sans", sans-serif;
  font-size: 12px;
  color: #333;
  background: #fff;
  overflow: hidden;
  border-bottom: 2px solid #444;
  box-sizing: border-box;
}
.i12 { width: 12px; height: 12px; flex: none; }
.i15 { width: 15px; height: 15px; flex: none; }
.i16 { width: 16px; height: 16px; flex: none; }
.i24 { width: 24px; height: 24px; flex: none; }
.i32 { width: 32px; height: 32px; flex: none; }
.tri {
  display: inline-block;
  width: 0;
  height: 0;
  border-left: 3px solid transparent;
  border-right: 3px solid transparent;
  border-top: 4px solid #666;
}
.tri.open { border-left-width: 4px; border-right-width: 4px; border-top-width: 5px; border-top-color: #888; }
.tri.shut { border-top: 4px solid transparent; border-bottom: 4px solid transparent; border-left: 5px solid #888; border-right: 0; }

/* title and tabs */
.top { position: relative; height: 41px; border-bottom: 1px solid #eee; box-sizing: border-box; flex: none; }
.logo { position: absolute; left: 9px; top: 3px; width: 30px; height: 30px; }
.logo-arrow { position: absolute; left: 39px; top: 31px; border-left: 4px solid transparent; border-bottom: 4px solid #666; }
.row-title { display: grid; grid-template-columns: 1fr auto 1fr; align-items: center; height: 21px; }
.qat { display: flex; align-items: center; gap: 10px; padding-left: 55px; }
.qat-item { display: flex; align-items: center; gap: 1px; height: 16px; }
.qat-item .tri { border-top-color: #aaa; }
.qat-more { margin-left: 2px; }
.title { line-height: 21px; white-space: nowrap; color: #333; font-size: 12px; letter-spacing: .25px; }
.win { display: flex; justify-content: flex-end; align-items: center; gap: 26px; padding-right: 13px; }
.row-tabs { display: flex; align-items: center; height: 19px; padding-left: 50px; }
.tab { padding: 0 13px; line-height: 19px; border-radius: 10px; white-space: nowrap; color: #444; }
.tab.on { background: #1f8bec; color: #fff; }
.tab-right { margin-left: auto; display: flex; align-items: center; }
.quick {
  width: 320px;
  height: 18px;
  box-sizing: border-box;
  border: 1px solid #e2e2e2;
  display: flex;
  align-items: center;
  justify-content: space-between;
  padding: 0 6px 0 3px;
  color: #aaa;
  font-size: 11.5px;
}
.avatar { width: 16px; height: 16px; margin-left: 6px; }
.uname { width: 36px; color: #333; }
.tr1 { margin-left: 16px; }
.tr2 { margin-left: 8px; }
.help { width: 20px; margin-left: 4px; font-size: 14px; color: #4e5769; display: flex; align-items: center; gap: 1px; padding-left: 4px; box-sizing: border-box; }
.help .tri { border-left-width: 2px; border-right-width: 2px; border-top-width: 3px; }
.tr3 { margin-left: 6px; }
.tr4 { margin-left: 7px; margin-right: 5px; }

/* ribbon */
.ribbon { display: flex; height: 99px; flex: none; box-sizing: border-box; padding-top: 2px; border-bottom: 2px solid #ddd; }
.rgroup { display: flex; flex-direction: column; border-right: 1px solid #dcdcdc; box-sizing: border-box; margin-bottom: 3px; }
.rgroup.first { width: 233px; }
.rbody { flex: 1; display: flex; min-height: 0; }
.rlabel { height: 20px; line-height: 26px; text-align: center; color: #555; white-space: nowrap; }
.big { display: flex; flex-direction: column; align-items: center; padding-top: 3px; white-space: nowrap; }
.big span { margin-top: 5px; line-height: 16px; }
.rbody.off .big span { color: #b5b5b5; }
.rbody.sel { padding-left: 8px; }
.pick-big {
  width: 40px;
  height: 67px;
  margin-top: 3px;
  background: #c2d9f1;
  border-radius: 3px;
  display: flex;
  flex-direction: column;
  align-items: center;
}
.pick-arrow { width: 20px; height: 28px; margin-top: 2px; }
.pick-big span { margin-top: 7px; line-height: 16px; }
.sel-col { display: flex; flex-direction: column; margin-left: 4px; padding-top: 1px; width: 95px; }
.col2 { width: auto; }
.small { display: flex; align-items: center; gap: 3px; height: 23px; white-space: nowrap; }
.small.off { color: #c4c4c4; }
.tri.attr { margin-left: 6px; }

/* combo row */
.combos { display: flex; gap: 3px; height: 26px; padding: 2px 3px 3px; background: #f0f0f0; box-sizing: border-box; flex: none; }
.combo {
  width: 99px;
  background: #fff;
  border-radius: 2px;
  border: 1px solid #e6e6e6;
  box-sizing: border-box;
  display: flex;
  align-items: center;
  justify-content: space-between;
  padding: 0 5px 0 2px;
  white-space: nowrap;
  overflow: hidden;
}
.combo span { overflow: hidden; width: 84px; }
.combo .tri { flex: none; }

/* body */
.main { display: flex; height: 882px; flex: none; }
.nav { width: 211px; flex: none; border: 1px solid #ddd; border-top: 0; box-sizing: border-box; display: flex; flex-direction: column; margin-right: 5px; }
.pane-bar { height: 11px; background: #e6e6e6; border-bottom: 1px solid #d8d8d8; position: relative; flex: none; }
.x { position: absolute; right: 3px; top: -2px; font-size: 10px; line-height: 14px; color: #aaa; }
.nav-head { height: 22px; line-height: 22px; padding-left: 8px; color: #888; background: #f0f0f0; border-bottom: 1px solid #ddd; box-sizing: border-box; flex: none; }
.nav-tools { height: 28px; flex: none; display: flex; align-items: center; justify-content: space-between; padding: 0 1px 0 8px; border-bottom: 1px solid #ddd; box-sizing: border-box; }
.nav-toggles { display: flex; gap: 4px; }
.toggle { width: 24px; height: 22px; border-radius: 4px; background: #c2d9f1; display: flex; align-items: center; justify-content: center; }
.nav-tree { position: relative; flex: 1; padding-top: 1.5px; overflow: hidden; }
.scroll-thumb { position: absolute; left: 198px; top: 149px; width: 8px; height: 559px; border-radius: 4px; background: #ccc; }
.nav-item { position: relative; display: flex; align-items: center; height: 24px; margin-left: 40px; width: 140px; gap: 7px; padding-left: 3px; box-sizing: border-box; border-radius: 3px; color: #444; white-space: nowrap; }
.nav-item.sel { background: #c3daf1; height: 22px; margin: 1px 0 1px 40px; }
.dot { position: absolute; left: 15px; top: 2px; width: 6px; height: 6px; background: #f00; border-radius: 50%; }
.nav-group { display: flex; align-items: center; height: 24px; padding-left: 10px; gap: 6px; color: #444; }
.lock { margin-left: -3px; }

.mid { width: 275px; flex: none; display: flex; flex-direction: column; gap: 3px; }
.pane { border: 1px solid #ddd; border-top: 0; box-sizing: border-box; background: #fff; }
.upper { height: 460px; }
.lower { flex: 1; }
.pane-tabs { height: 23px; display: flex; background: #f0f0f0; border-bottom: 1px solid #ddd; box-sizing: border-box; }
.ptab { width: 64px; text-align: center; line-height: 22px; background: #ddd; color: #888; margin-right: 1px; }
.ptab.act { background: #f0f0f0; color: #333; font-weight: 700; }
.pane-tools { display: flex; align-items: center; height: 27px; padding-left: 3px; border-bottom: 1px solid #e6e6e6; box-sizing: border-box; position: relative; }
.ptool { display: flex; align-items: center; gap: 5px; white-space: nowrap; color: #444; position: relative; }
.tool-arrow { position: absolute; right: -12px; top: 7px; border-top-color: #aaa; }
.more { position: absolute; right: 2px; top: 3px; width: 10px; height: 20px; display: flex; align-items: center; justify-content: center; border: 1px solid #eee; border-radius: 3px; }
.pane-search { height: 20px; display: flex; align-items: center; justify-content: space-between; padding: 0 5px 0 2px; color: #aaa; border-bottom: 1px solid #e6e6e6; box-sizing: border-box; }
.part-tree { padding-top: 2px; }
.part-root { display: flex; align-items: center; gap: 4px; height: 24px; padding-left: 12px; color: #444; }
.part { height: 24px; display: flex; align-items: center; padding-left: 40px; color: #444; letter-spacing: .3px; }
.part span { padding: 0 3px; line-height: 21px; border-radius: 3px; }
.part .hit { background: #c3daf1; }

.layer-tools { display: flex; align-items: center; gap: 7px; padding-left: 5px; height: 27px; }
.layer-tools .ptool + .ptool { margin-left: 5px; }
.layers { border-collapse: collapse; width: 273px; table-layout: fixed; }
.layers th, .layers td { border: 1px solid #ddd; height: 20px; padding: 0; font-weight: 400; color: #444; }
.layers th { text-align: center; }
.layers td { padding-left: 5px; white-space: nowrap; }
.layers .c1 { width: 49px; text-align: center; padding: 0; }
.layers .c2 { width: 36px; text-align: center; padding: 0; }
.layers .arrow-cell { padding-left: 7px; }
.check { display: inline-flex; width: 14px; height: 14px; background: #2f83ea; border-radius: 2px; vertical-align: middle; }

.gutter { width: 4px; flex: none; position: relative; }
.grip { position: absolute; left: 0; top: 391px; width: 4px; height: 101px; background: #5d5d5d; }

.canvas { position: relative; flex: 1; overflow: hidden; background: #666; }
.drawing { display: block; }
.cad text { font-family: Roboto, "Liberation Sans", sans-serif; font-weight: 100; stroke: none; }
.teal text { fill: #0c9a96; }
.lime text { fill: #18e018; }
.axis { font-family: "Liberation Sans", sans-serif; font-size: 18px; fill: #f2f2f2; }
.axis-y { font-family: "Liberation Sans", sans-serif; font-size: 12px; fill: #18e018; }
.axis-x { font-family: "Liberation Sans", sans-serif; font-size: 12px; fill: #f02020; }

.extract {
  position: absolute;
  left: 0;
  top: 0;
  width: 146px;
  height: 115px;
  box-sizing: border-box;
  background: #1f4e7e;
  border: 1px solid #2868a8;
  padding: 0 6px 0 7px;
}
.extract-head { height: 12px; margin: 1px -6px 6px -7px; background: #163a5f; color: #fff; font-size: 8px; line-height: 12px; text-align: right; padding-right: 4px; }
.extract-btn { height: 26px; margin-bottom: 6px; line-height: 25px; text-align: center; color: #fff; border: 1px solid #173c62; box-sizing: border-box; display: flex; justify-content: center; }
.extract-btn.split { justify-content: space-between; margin-bottom: 0; }
.main-part { flex: 1; }
.drop { width: 15px; border-left: 1px solid #173c62; display: flex; align-items: center; justify-content: center; }
.drop i { border-left: 4px solid transparent; border-right: 4px solid transparent; border-top: 4px solid #fff; }

.viewbar {
  position: absolute;
  right: 0;
  top: 1px;
  width: 33px;
  height: 245px;
  background: #fff;
  border-radius: 2px 0 0 2px;
  display: flex;
  flex-direction: column;
  align-items: center;
  padding-top: 10px;
  box-sizing: border-box;
}
.viewbar .i24 { margin-bottom: 5px; }
.view-tri { border-left: 4px solid transparent; border-right: 4px solid transparent; border-top: 5px solid #4e5769; margin-bottom: 5px; }
.view-line { width: 27px; height: 1px; background: #777; margin: 1px 0 5px; flex: none; }

/* status bar */
.status { position: relative; display: flex; align-items: center; flex: 1; font-size: 12px; color: #333; white-space: nowrap; background: #fdfdfd; }
.s-xy { margin-left: 2px; width: 263px; letter-spacing: .3px; word-spacing: 1.5px; }
.s-a { width: 40px; }
.s-b { width: 43px; }
.s-c { width: 40px; }
.s-d { width: 92px; }
.s-e { width: 103px; }
.s-f { width: 37px; }
.s-g { width: 68px; }
.s-btns { display: flex; gap: 4px; }
.s-btn { height: 24px; box-sizing: border-box; border: 1px solid #ccc; border-radius: 3px; display: flex; align-items: center; justify-content: center; gap: 2px; background: #fff; }
.s-btn.on { background: #cfe2f8; border-color: #5a9ae6; }
.s-btn .tri { border-left-width: 2px; border-right-width: 2px; border-top-width: 3px; }
.s-hint { margin-left: 9px; }
</style>
